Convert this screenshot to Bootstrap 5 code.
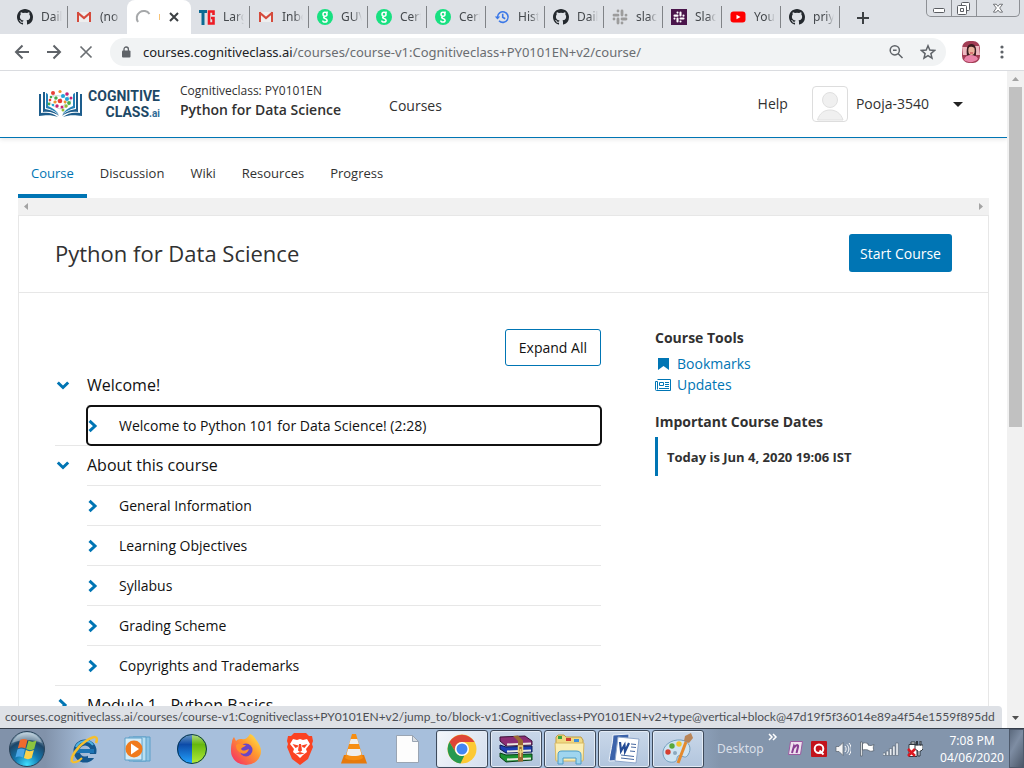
<!DOCTYPE html>
<html lang="en">
<head>
<meta charset="utf-8">
<meta name="viewport" content="width=device-width, initial-scale=1">
<title>Python for Data Science</title>
<link href="https://cdn.jsdelivr.net/npm/bootstrap@5.3.0/dist/css/bootstrap.min.css" rel="stylesheet">
<style>
  :root { --edx: #0075b4; --ink: #313131; --rule: #e7e7e7; }
  body { font-family: "Open Sans", "Noto Sans", sans-serif; font-size: 14px; line-height: 20px; color: var(--ink); background: #fff; }
  svg { display: block; flex: none; }
  button { font-family: inherit; }
  .ui-btn { border: 0; padding: 0; background: transparent; color: inherit; }

  /* browser frame */
  .tabstrip { height: 34px; background: #dee1e6; padding-left: 9px; font-family: "Noto Sans", sans-serif; font-size: 12px; color: #45494d; }
  .btab { width: 59px; height: 34px; padding: 0 3px 0 8px; gap: 8px; }
  .btab span { overflow: hidden; white-space: nowrap; width: 21px; -webkit-mask-image: linear-gradient(90deg, #000 60%, transparent); mask-image: linear-gradient(90deg, #000 60%, transparent); }
  .btab.sep { border-right: 1px solid transparent; border-image: linear-gradient(transparent 7px, #808387 7px, #808387 27px, transparent 27px) 1; }
  .btab.current { width: 64px; background: #fff; border-radius: 8px 8px 0 0; }
  .wincaps { height: 17px; border: 1px solid #8d9095; border-top: 0; border-radius: 0 0 5px 5px; margin-right: 4px; }
  .wincaps button { height: 16px; }
  .wincaps button + button { border-left: 1px solid #8d9095; }
  .toolbar { height: 37px; border-bottom: 1px solid #dadce0; padding: 0 20px 0 14px; color: #5f6368; }
  .omnibox { height: 28px; border-radius: 14px; background: #f1f3f4; padding: 0 10px 0 11px; }
  .urlbox { font-family: "Noto Sans", sans-serif; font-size: 13px; white-space: nowrap; color: #6a6d71; }
  .urlbox b { font-weight: 400; color: #202124; }
  .vbar { width: 17px; background: #f1f1f1; }
  .vthumb { width: 13px; height: 340px; background: #c1c1c1; }
  .statusline { position: absolute; left: 0; bottom: 0; height: 22px; padding: 0 7px 0 5px; background: #dee1e6; border-top-right-radius: 4px; font-family: "Lato", "Noto Sans", sans-serif; font-size: 12px; line-height: 22px; color: #4c4f54; white-space: nowrap; }

  /* course site */
  .site-header { height: 67px; border-bottom: 1px solid var(--edx); box-shadow: 0 1px 5px rgba(0,0,0,.12); padding: 0 44px 0 38px; }
  .wordmark { width: 77px; font-family: "Liberation Sans Narrow", "Roboto", sans-serif; font-weight: 700; font-size: 14px; line-height: 16px; color: #1d4866; text-align: right; }
  .wordmark small { font-size: 10px; line-height: 1; color: #2e6c96; }
  .site-header a, .course-tabs a { color: var(--ink); text-decoration: none; }
  .org { font-size: 12px; line-height: 20px; }
  .cname { font-size: 14px; font-weight: 600; line-height: 18px; }
  .userpic { width: 36px; height: 36px; border: 1px solid #ddd; border-radius: 4px; }
  .course-tabs { padding: 11px 18px 0; font-size: 13px; }
  .course-tabs .nav-link { height: 49px; padding: 14px 13px 0; border-bottom: 4px solid transparent; }
  .course-tabs .nav-link.active { color: var(--edx); border-color: var(--edx); }
  .hbar { height: 17px; background: #f1f1f1; margin: 0 18px; padding: 0 5px; }
  .sheet { margin: 0 18px; border: 1px solid var(--rule); }
  .sheet-head { padding: 18px 36px 20px; border-bottom: 1px solid var(--rule); }
  .sheet-head h1 { font-size: 22px; line-height: 38px; font-weight: 400; color: #313131; }
  .btn-start { height: 38px; padding: 0 10px; font-size: 14px; border-radius: 3px; background: var(--edx); color: #fff; }
  .btn-expand { height: 37px; padding: 0 13px; font-size: 14px; border: 1px solid var(--edx); border-radius: 3px; color: #111; background: #fff; }
  .sheet-body { padding: 36px; gap: 54px; }
  .side { width: 297px; }
  .outline, .outline ol { list-style: none; margin: 0; padding: 0; }
  .outline > li { border-bottom: 1px solid var(--rule); }
  .outline button { width: 100%; text-align: left; color: #111; }
  .outline .sec-btn { height: 39px; padding-bottom: 2px; font-size: 16px; gap: 16px; }
  .outline ol { padding-left: 32px; }
  .outline ol li { border-top: 1px solid var(--rule); }
  .sub-btn { height: 39px; font-size: 14px; gap: 20px; }
  .sub-btn.focused { outline: 2px solid #111; outline-offset: -1px; border-radius: 4px; }
  .side h2 { font-size: 14px; line-height: 18px; font-weight: 700; margin: 0 0 6px; }
  .side .links { margin-bottom: 18px; }
  .side a { color: var(--edx); text-decoration: none; gap: 6px; line-height: 21px; }
  .today { border-left: 3px solid var(--edx); padding: 10px 0 9px 9px; font-size: 13px; font-weight: 700; }

  /* taskbar */
  .taskbar { height: 40px; border-top: 1px solid #343c48; background: linear-gradient(90deg, #8192aa 0, #8192aa 45px, #a7bfdc 90px, #a7bfdc 650px, #8395ac 720px); font-family: "Noto Sans", sans-serif; font-size: 12px; color: #fff; }
  .start-btn { width: 57px; padding-left: 8px; }
  .slot { width: 54px; height: 39px; }
  .slot.running > span { width: 52px; height: 38px; border: 1px solid #3e4a5b; border-radius: 3px; box-shadow: inset 0 0 0 1px #e3ebf5; background: linear-gradient(#c9d7e9, #b2c5dd); display: flex; align-items: center; justify-content: center; }
  .slot.front > span { background: linear-gradient(120deg, #f4f7fb, #d4dfee); }
  .clock { width: 66px; line-height: 17px; text-align: center; }
  .peek { width: 15px; border: 1px solid #4d596b; background: linear-gradient(120deg, #5c6a7e, #7e8da3 40%, #4b5768); }
  .deskbar { color: #d9dfe8; }
</style>
</head>
<body>
<svg width="0" height="0" class="position-absolute" aria-hidden="true">
  <symbol id="octo" viewBox="0 0 16 16"><path fill="#24292e" d="M8 0C3.58 0 0 3.58 0 8c0 3.54 2.29 6.53 5.47 7.59.4.07.55-.17.55-.38v-1.49C4 14.09 3.48 13.2 3.32 12.75c-.09-.23-.48-.94-.82-1.13-.28-.15-.68-.52-.01-.53.63-.01 1.08.58 1.23.82.72 1.21 1.87.87 2.33.66.07-.52.28-.87.51-1.07-1.78-.2-3.64-.89-3.64-3.95 0-.87.31-1.59.82-2.15-.08-.2-.36-1.02.08-2.12 0 0 .67-.21 2.2.82a7.6 7.6 0 0 1 4 0c1.53-1.04 2.2-.82 2.2-.82.44 1.1.16 1.92.08 2.12.51.56.82 1.27.82 2.15 0 3.07-1.87 3.75-3.65 3.95.29.25.54.73.54 1.48v2.2c0 .21.15.46.55.38A8 8 0 0 0 16 8c0-4.42-3.58-8-8-8z"/></symbol>
  <symbol id="gmail" viewBox="0 0 16 16"><path fill="#eee" d="M2 3h12v10H2z"/><path fill="#d54b3d" d="M1 3h2v10H1zM13 3h2v10h-2z"/><path fill="none" stroke="#d54b3d" stroke-width="2.2" d="M1.500 3.500 8 9l6.500-5.500"/></symbol>
  <symbol id="guvi" viewBox="0 0 16 16"><circle cx="8" cy="8" r="8" fill="#18e081"/><g fill="none" stroke="#fff" stroke-width="1.500"><circle cx="8" cy="5.300" r="2"/><path d="M9.500 3.500 10.700 2.800M8 7.500c-1.800.6-1.800 1.600 0 2 2.800.5 2.800 3.500 0 3.500-1.500 0-2.200-.7-2.200-1.600"/></g></symbol>
  <symbol id="hash" viewBox="0 0 16 16"><path fill="none" stroke="currentColor" stroke-width="2.800" stroke-linecap="round" d="M6 2v.1M6 6.200H2M10 2v4M14 6.200v-.1M10 14v-.1M10 10h4M6 14v-4M2 10v.1"/></symbol>
  <symbol id="chev" viewBox="0 0 12 14"><path fill="none" stroke="#0075b4" stroke-width="3" d="M2.500 1.800 8 7l-5.500 5.200"/></symbol>
  <symbol id="chevdown" viewBox="0 0 14 12"><path fill="none" stroke="#0075b4" stroke-width="3" d="M1.800 3.500 7 8.500l5.200-5"/></symbol>
</svg>

<div class="vh-100 d-flex flex-column overflow-hidden">
  <header>
    <div class="tabstrip d-flex align-items-start">
      <div class="btab sep d-flex align-items-center"><svg width="16" height="16"><use href="#octo"/></svg><span>Daily</span></div>
      <div class="btab d-flex align-items-center"><svg width="16" height="16"><use href="#gmail"/></svg><span>(no</span></div>
      <div class="btab current d-flex align-items-center">
        <svg width="16" height="16" viewBox="0 0 16 16"><path fill="none" stroke="#a6a8aa" stroke-width="2" d="M3 13A7 7 0 0 1 14.500 5"/></svg>
        <svg width="2" height="8"><path d="M0 1h1v6H0z" fill="#f8c477"/></svg>
        <button class="ui-btn" aria-label="Close tab"><svg width="10" height="10" viewBox="0 0 10 10"><path stroke="#3c4043" stroke-width="2" d="m1 1 8 8M9 1 1 9"/></svg></button>
      </div>
      <div class="btab sep d-flex align-items-center"><svg width="16" height="16" viewBox="0 0 16 16"><path fill="#0c6a93" d="M0 1h8v3H5.500v12h-3V4H0z"/><path fill="none" stroke="#ee1c25" stroke-width="2.600" d="M14.500 6V2.500H10v12h4.500V9H12"/></svg><span>Large</span></div>
      <div class="btab sep d-flex align-items-center"><svg width="16" height="16"><use href="#gmail"/></svg><span>Inbox</span></div>
      <div class="btab sep d-flex align-items-center"><svg width="16" height="16"><use href="#guvi"/></svg><span>GUVI</span></div>
      <div class="btab sep d-flex align-items-center"><svg width="16" height="16"><use href="#guvi"/></svg><span>Certi</span></div>
      <div class="btab sep d-flex align-items-center"><svg width="16" height="16"><use href="#guvi"/></svg><span>Certi</span></div>
      <div class="btab sep d-flex align-items-center"><svg width="16" height="16" viewBox="0 0 16 16"><path fill="none" stroke="#3b78e7" stroke-width="1.600" d="M3.500 8A5.300 5.300 0 1 1 5 11.800M8.700 4.800v3.500l2.500 1.500"/><path fill="#3b78e7" d="M.8 7.500h5.400L3.500 10.500z"/></svg><span>Histo</span></div>
      <div class="btab sep d-flex align-items-center"><svg width="16" height="16"><use href="#octo"/></svg><span>Daily</span></div>
      <div class="btab sep d-flex align-items-center"><svg width="16" height="16" color="#9c9c9c"><use href="#hash"/></svg><span>slack</span></div>
      <div class="btab sep d-flex align-items-center"><svg width="16" height="16" viewBox="0 0 16 16" color="#fff"><path fill="#4a154b" d="M0 0h16v16H0z"/><use href="#hash" x="2" y="2" width="12" height="12"/></svg><span>Slack</span></div>
      <div class="btab sep d-flex align-items-center"><svg width="16" height="16" viewBox="0 0 16 16"><rect y="2.500" x=".5" width="15" height="11" rx="3" fill="#f00"/><path fill="#fff" d="m6.500 5.700 4 2.300-4 2.300z"/></svg><span>YouT</span></div>
      <div class="btab sep d-flex align-items-center"><svg width="16" height="16"><use href="#octo"/></svg><span>priya</span></div>
      <button class="ui-btn ms-3 mt-2 pt-1" aria-label="New tab"><svg width="14" height="12" viewBox="0 0 14 12"><path stroke="#3c4043" stroke-width="2" d="M7 0v12M1 6h12"/></svg></button>
      <div class="wincaps ms-auto d-flex">
        <button class="ui-btn px-1" aria-label="Minimize"><svg width="16" height="16" viewBox="0 0 16 16"><rect x="2.500" y="8.500" width="11" height="4" rx="1" fill="#fff" stroke="#5a5d62"/></svg></button>
        <button class="ui-btn px-1" aria-label="Restore"><svg width="16" height="16" viewBox="0 0 16 16" fill="#fff" stroke="#5a5d62"><rect x="5.500" y="2.500" width="8" height="8" rx="1"/><rect x="1.500" y="5.500" width="9" height="9" rx="1"/><path d="M4.500 8.500h3v3h-3z"/></svg></button>
        <button class="ui-btn px-3" aria-label="Close"><svg width="10" height="16" viewBox="0 0 12 16"><path d="M.5 3.500h3.500L6 6l2-2.500h3.500L8 8l3.500 5H8L6 10.500 4 13H.5L4 8z" fill="#fff" stroke="#5a5d62"/></svg></button>
      </div>
    </div>
    <div class="toolbar d-flex align-items-center">
      <button class="ui-btn me-3" aria-label="Back"><svg width="16" height="16" viewBox="0 0 16 16"><path fill="none" stroke="#5f6368" stroke-width="2" d="M15 8H2.500M8.500 1.500 2 8l6.500 6.500"/></svg></button>
      <button class="ui-btn me-3" aria-label="Forward"><svg width="16" height="16" viewBox="0 0 16 16"><path fill="none" stroke="#5f6368" stroke-width="2" d="M1 8h12.500M7.500 1.500 14 8l-6.500 6.500"/></svg></button>
      <button class="ui-btn me-3" aria-label="Stop"><svg width="16" height="16" viewBox="0 0 16 16"><path stroke="#6b6f73" stroke-width="1.700" d="m2.500 2.500 11 11M13.500 2.500l-11 11"/></svg></button>
      <div class="omnibox flex-grow-1 d-flex align-items-center">
        <svg width="10" height="12" viewBox="0 0 10 12" class="me-2"><rect x="1" y="4.500" width="8.500" height="7" rx="1" fill="#5f6368"/><path d="M3 5V3.200a2.200 2.200 0 0 1 4.400 0V5" fill="none" stroke="#5f6368" stroke-width="1.300"/></svg>
        <div class="urlbox flex-grow-1 ps-1" role="textbox" aria-label="Address" contenteditable="true" spellcheck="false"><b>courses.cognitiveclass.ai</b>/courses/course-v1:Cognitiveclass+PY0101EN+v2/course/</div>
        <button class="ui-btn me-3" aria-label="Zoom"><svg width="16" height="16" viewBox="0 0 16 16"><g fill="none" stroke="#5f6368" stroke-width="1.500"><circle cx="6.800" cy="6.300" r="4.600"/><path d="M10 9.500 14.500 14M5 6.300h3.600"/></g></svg></button>
        <button class="ui-btn" aria-label="Bookmark this page"><svg width="16" height="16" viewBox="0 0 16 16"><path fill="none" stroke="#5f6368" stroke-width="1.500" d="m8 1.800 1.800 4.300 4.700.4-3.600 3.100 1.100 4.600L8 11.700l-4 2.500 1.100-4.600L1.500 6.500l4.700-.4z"/></svg></button>
      </div>
      <svg width="18" height="22" viewBox="0 0 18 22" class="mx-3"><rect width="18" height="22" rx="7" fill="#a23c54"/><path fill="#edb8c0" d="M0 6h5v8H1zM13 5h4l1 9h-4z"/><path fill="#3a1c20" d="M5 15C4 8 5 3 9.500 3S15 9 13.500 15z"/><ellipse cx="9.500" cy="9.500" rx="3.200" ry="4.500" fill="#e9b29c"/><path fill="#3a1c20" d="M6 7c1-3 6-4 7 0-3-1-5-2-7 0z"/><path fill="#e983a8" d="M2 19c1-4 4-5 7-5s6 1 7 4c-4 4-10 4-14 1z"/><path d="M8 12h3" stroke="#c53548"/></svg>
      <button class="ui-btn ps-1" aria-label="Menu"><svg width="4" height="16" viewBox="0 0 4 16" fill="#5f6368"><circle cx="2" cy="3" r="1.600"/><circle cx="2" cy="8" r="1.600"/><circle cx="2" cy="13" r="1.600"/></svg></button>
    </div>
  </header>

  <div class="flex-fill d-flex position-relative overflow-hidden">
    <div class="flex-fill overflow-hidden">
      <div class="site-header d-flex align-items-center">
        <a href="#" class="d-flex align-items-center" aria-label="Cognitive Class home">
          <svg width="45" height="32" viewBox="0 0 45 32">
            <path fill="#1d5d8c" d="M1 6h2v19c7-1 12 0 17 4-6-2-11-2-19-1zM44 6h-2v19c-7-1-12 0-17 4 6-2 11-2 19-1z"/>
            <path fill="#1d5d8c" d="M5 4h2v17c6 1 11 3 14 7-4-3-9-5-16-4zM40 4h-2v17c-6 1-11 3-14 7 4-3 9-5 16-4z"/>
            <path fill="#2581b8" d="M8 5c1 0 2 1 2 2v11c5 2 9 5 11 9-4-4-8-6-13-7zM37 5c-1 0-2 1-2 2v11c-5 2-9 5-11 9 4-4 8-6 13-7z"/>
            <g stroke="#b9c8d0" stroke-width=".7" fill="none"><path d="m11 13 4-6 7 1 7-1 4 6-4 6-7 2-7-3zM15 7l3 7 8-6 3 6-7 7"/></g>
            <g fill="#e83e35"><circle cx="15" cy="5" r="2"/><circle cx="22" cy="13" r="2.300"/><circle cx="12" cy="12" r="1.300"/></g>
            <g fill="#46aa49"><circle cx="18" cy="10" r="1.700"/><circle cx="11" cy="16" r="1.400"/><circle cx="31" cy="15" r="1.900"/><circle cx="13" cy="9" r="1.300"/></g>
            <g fill="#f39330"><circle cx="22" cy="3.500" r="1.600"/><circle cx="17" cy="14" r="1.600"/><circle cx="27" cy="14" r="1.400"/></g>
            <g fill="#22a5d8"><circle cx="25" cy="8" r="2"/><circle cx="29" cy="11" r="2"/><circle cx="15" cy="17" r="1.300"/></g>
            <g fill="#c72373"><circle cx="29" cy="6" r="1.800"/><circle cx="19" cy="18" r="1.700"/><circle cx="33" cy="10" r="1.500"/><circle cx="24" cy="19" r="1.500"/></g>
            <g fill="#94bd39"><circle cx="28" cy="18" r="1.700"/><circle cx="25" cy="22" r="1.500"/></g>
          </svg>
          <span class="wordmark">COGNITIVE<br>CLASS<small>.ai</small></span>
        </a>
        <div class="ms-3 ps-1 pb-2">
          <div class="org">Cognitiveclass: PY0101EN</div>
          <div class="cname">Python for Data Science</div>
        </div>
        <a href="#" class="ms-5 pt-1">Courses</a>
        <a href="#" class="ms-auto me-4">Help</a>
        <span class="userpic d-block me-2"><svg width="34" height="34" viewBox="0 0 34 34"><g fill="#f0f0f0" stroke="#e0e0e0"><circle cx="17" cy="13" r="7.500"/><path d="M4.500 33c2-7 7-10 12.500-10s11 3 13 10z"/></g></svg></span>
        <button class="ui-btn d-flex align-items-center gap-4" aria-haspopup="true">Pooja-3540 <svg width="10" height="5" viewBox="0 0 10 5"><path d="M0 0h10L5 5z" fill="#222"/></svg></button>
      </div>

      <nav class="course-tabs nav" aria-label="Course">
        <a class="nav-link active" href="#" aria-current="page">Course</a>
        <a class="nav-link" href="#">Discussion</a>
        <a class="nav-link" href="#">Wiki</a>
        <a class="nav-link" href="#">Resources</a>
        <a class="nav-link" href="#">Progress</a>
      </nav>
      <div class="hbar d-flex align-items-center justify-content-between">
        <svg width="5" height="7"><path d="M5 0v7L1 3.500z" fill="#a3a3a3"/></svg>
        <svg width="5" height="7"><path d="M0 0v7l4-3.500z" fill="#a3a3a3"/></svg>
      </div>

      <main class="sheet">
        <div class="sheet-head d-flex justify-content-between">
          <h1 class="m-0">Python for Data Science</h1>
          <button class="btn btn-start">Start Course</button>
        </div>
        <div class="sheet-body d-flex">
          <div class="flex-fill">
            <div class="text-end"><button class="btn btn-expand">Expand All</button></div>
            <ol class="outline">
              <li>
                <button class="ui-btn sec-btn d-flex align-items-center"><svg width="16" height="12"><use href="#chevdown"/></svg>Welcome!</button>
                <ol>
                  <li><button class="ui-btn sub-btn focused d-flex align-items-center"><svg width="12" height="14"><use href="#chev"/></svg>Welcome to Python 101 for Data Science! (2:28)</button></li>
                </ol>
              </li>
              <li>
                <button class="ui-btn sec-btn d-flex align-items-center"><svg width="16" height="12"><use href="#chevdown"/></svg>About this course</button>
                <ol>
                  <li><button class="ui-btn sub-btn d-flex align-items-center"><svg width="12" height="14"><use href="#chev"/></svg>General Information</button></li>
                  <li><button class="ui-btn sub-btn d-flex align-items-center"><svg width="12" height="14"><use href="#chev"/></svg>Learning Objectives</button></li>
                  <li><button class="ui-btn sub-btn d-flex align-items-center"><svg width="12" height="14"><use href="#chev"/></svg>Syllabus</button></li>
                  <li><button class="ui-btn sub-btn d-flex align-items-center"><svg width="12" height="14"><use href="#chev"/></svg>Grading Scheme</button></li>
                  <li><button class="ui-btn sub-btn d-flex align-items-center"><svg width="12" height="14"><use href="#chev"/></svg>Copyrights and Trademarks</button></li>
                </ol>
              </li>
              <li><button class="ui-btn sec-btn d-flex align-items-center"><svg width="16" height="14"><use href="#chev"/></svg>Module 1 - Python Basics</button></li>
            </ol>
          </div>
          <aside class="side">
            <h2>Course Tools</h2>
            <div class="links">
              <a href="#" class="d-flex align-items-center"><svg width="16" height="14" viewBox="0 0 16 14"><path fill="#0075b4" d="M3 1h11v12l-5.500-4L3 13z"/></svg>Bookmarks</a>
              <a href="#" class="d-flex align-items-center"><svg width="16" height="12" viewBox="0 0 16 12"><path fill="none" stroke="#0075b4" d="M2.500.5h13v11h-14a1 1 0 0 1-1-1v-8h2v8M4.500 3.500h4v3h-4zM10 3.500h4M10 5.500h4M10 7.500h4M4 9.500h10"/></svg>Updates</a>
            </div>
            <h2>Important Course Dates</h2>
            <div class="today">Today is Jun 4, 2020 19:06 IST</div>
          </aside>
        </div>
      </main>
    </div>
    <div class="vbar d-flex flex-column align-items-center justify-content-between py-1">
      <div><svg width="13" height="12" viewBox="0 0 13 12"><path d="M3 6h7L6.500 2z" fill="#a3a3a3"/></svg><div class="vthumb"></div></div>
      <svg width="13" height="9" viewBox="0 0 13 9"><path d="M3 1h7L6.500 5z" fill="#505050"/></svg>
    </div>
    <div class="statusline">courses.cognitiveclass.ai/courses/course-v1:Cognitiveclass+PY0101EN+v2/jump_to/block-v1:Cognitiveclass+PY0101EN+v2+type@vertical+block@47d19f5f36014e89a4f54e1559f895dd</div>
  </div>

  <footer class="taskbar d-flex align-items-center">
    <button class="ui-btn start-btn" aria-label="Start"><svg width="38" height="38" viewBox="0 0 38 38">
      <defs><radialGradient id="orb" cx=".5" cy=".95" r=".9"><stop offset="0" stop-color="#3fe0ff"/><stop offset=".4" stop-color="#1479b0"/><stop offset=".75" stop-color="#1d4668"/><stop offset="1" stop-color="#9ab6c8"/></radialGradient></defs>
      <circle cx="19" cy="19" r="17.500" fill="url(#orb)" stroke="#2a4258"/><path d="M4 13a16 16 0 0 1 30 0c-9-4-21-4-30 0z" fill="#fff" opacity=".35"/>
      <path fill="#ee6a2e" d="M12 10c2.500-1.500 5-1.500 7.500 0l-2.200 8.500c-2.500-1.500-5-1.500-7.500 0z"/><path fill="#8cc43f" d="M20.500 10.500c2.500 1.500 5 1.500 8 0l-2.300 8.500c-2.500 1.500-5 1.500-8 0z"/><path fill="#4ba6e6" d="M9.400 19.500c2.500-1.500 5-1.500 7.500 0l-2 8c-2.500-1.500-5-1.500-7.500 0z"/><path fill="#fcd14a" d="M17.900 20c2.500 1.500 5 1.500 8 0l-2.200 8c-2.500 1.500-5 1.500-7.800 0z"/></svg></button>
    <button class="ui-btn slot d-flex align-items-center justify-content-center" aria-label="Internet Explorer"><svg width="32" height="32" viewBox="0 0 32 32"><circle cx="17" cy="18" r="8.500" fill="none" stroke="#14578e" stroke-width="6"/><path d="M8 18h18" stroke="#1d74b4" stroke-width="4"/><path d="M20 21h9v4h-9z" fill="#a7bfdc"/><path d="M8 14a10 10 0 0 1 17-2" fill="none" stroke="#4fb4e4" stroke-width="2"/><path d="M4 29C2 24 10 13 18 8S31 2 28 10" fill="none" stroke="#f6bf2c" stroke-width="2.500"/><path d="M4 29c3 1 7-1 10-4" fill="none" stroke="#f6bf2c" stroke-width="2"/></svg></button>
    <button class="ui-btn slot d-flex align-items-center justify-content-center" aria-label="Media Player"><svg width="30" height="28" viewBox="0 0 30 28"><path fill="#8fc4e4" stroke="#5d9fc8" d="M10 2h17v24H10z"/><path fill="#b9dff2" stroke="#5d9fc8" d="M6 2h17v24H6z"/><path fill="#d3ebf7" stroke="#5d9fc8" d="M2 3h17v22H2z"/><circle cx="11" cy="14" r="8.500" fill="#f07a1c"/><path fill="#fff" d="m8 8.500 8 5.500-8 5.500z"/></svg></button>
    <button class="ui-btn slot d-flex align-items-center justify-content-center" aria-label="Meeting"><svg width="32" height="32" viewBox="0 0 32 32">
      <defs><linearGradient id="wl" x2="0" y2="1"><stop offset="0" stop-color="#6f9dc4"/><stop offset=".35" stop-color="#0d4ba8"/><stop offset="1" stop-color="#23a4ff"/></linearGradient><linearGradient id="wr" x2="0" y2="1"><stop offset="0" stop-color="#b5dc8a"/><stop offset=".35" stop-color="#66b80e"/><stop offset="1" stop-color="#b5ee3a"/></linearGradient></defs>
      <path d="M16 1a15 15 0 0 0 0 30z" fill="url(#wl)"/><path d="M16 1a15 15 0 0 1 0 30z" fill="url(#wr)"/><circle cx="16" cy="16" r="14.500" fill="none" stroke="#0c3852"/></svg></button>
    <button class="ui-btn slot d-flex align-items-center justify-content-center" aria-label="Firefox"><svg width="32" height="32" viewBox="0 0 32 32"><defs><linearGradient id="fox" x1="1" y1="0" x2="0" y2="1"><stop offset="0" stop-color="#fff34f"/><stop offset=".4" stop-color="#ff9a2e"/><stop offset="1" stop-color="#f5206b"/></linearGradient></defs><path fill="url(#fox)" d="M2 9c0-2 1-4 2-5l2 4c2-2 4-2 6-2 2 1 5 0 8-5 4 1 5 5 7 7 2 3 4 6 4 10a15 14 0 0 1-30 0c0-3 0-6 1-9z"/><circle cx="16" cy="17" r="6.500" fill="#6b45c5"/><path fill="#ff8f2b" d="M6 12c4-3 7 0 10 0-1 2-4 2-5 4 2 3 5 1 8 0-1 4-5 6-8 4-4-2-5-5-5-8z"/></svg></button>
    <button class="ui-btn slot d-flex align-items-center justify-content-center" aria-label="Brave"><svg width="28" height="34" viewBox="0 0 28 34"><path fill="#fb4322" d="m8 1h12l3 3h3l1 5-1 3 1 3-5 12-8 6-8-6L1 15l1-3-1-3 1-5h3z"/><path fill="#fff" d="m7 7 4 1 3-1 3 1 4-1 3 5-4 5 1 3-4 3-3 3-3-3-4-3 1-3-4-5z"/><path fill="#fb4322" d="m6.500 12 6 1.500-1 1.500-2 1zM21.500 12l-6 1.500 1 1.500 2 1zM13 12h2l1 6.500-2 1.500-2-1.500zM9.500 21.500l4.500-1.500 4.500 1.500-4.500 1z"/></svg></button>
    <button class="ui-btn slot d-flex align-items-center justify-content-center" aria-label="VLC"><svg width="28" height="32" viewBox="0 0 28 32"><path fill="#e67a0c" d="M4 22h20l3 8.500H1z"/><path fill="#f78e12" d="M12 1h4l7 24c-4 3-14 3-18 0z"/><path fill="#eee" d="M10.700 6h6.600l1.500 5H9.200zM8 16h12l1.500 5.500c-4 2-11 2-15 0z"/></svg></button>
    <button class="ui-btn slot d-flex align-items-center justify-content-center" aria-label="Document"><svg width="24" height="30" viewBox="0 0 24 30"><path fill="#fdfdfd" stroke="#9aa5b3" d="M.500 1.500h16l6 6v21H.500z"/><path fill="#d9dde2" stroke="#9aa5b3" d="M16.500 1.500v6h6z"/></svg></button>
    <button class="ui-btn slot running front d-flex align-items-center justify-content-center" aria-label="Chrome"><span><svg width="30" height="30" viewBox="0 0 30 30"><circle cx="15" cy="15" r="14.500" fill="#fcc934"/><path fill="#de4637" d="M2.400 8A14.500 14.500 0 0 1 27.500 8H15a7 7 0 0 0-6.500 10z"/><path fill="#25994f" d="M2.400 8 8.900 18.500c1.500 3 5 4 8.500 3L13.500 29.400A14.500 14.500 0 0 1 2.400 8z"/><circle cx="15" cy="15" r="7" fill="#fff"/><circle cx="15" cy="15" r="5.500" fill="#4286f4"/></svg></span></button>
    <button class="ui-btn slot running d-flex align-items-center justify-content-center" aria-label="WinRAR"><span><svg width="34" height="28" viewBox="0 0 34 28"><path fill="#8b2e74" stroke="#3b1138" d="m1 2 25-1 7 5v4l-26 1-6-5z"/><path fill="#1b3fb4" stroke="#0c1a50" d="m1 10 6 2 26-1v6l-26 1-6-4z"/><path fill="#1b9333" stroke="#0a3f16" d="m1 18 6 2 26-1v6l-26 2-6-5z"/><path stroke="#ece9e0" stroke-width="2" d="M8 9.500 32 8.500M8 16.500l24-1M8 24.500l24-1"/><path fill="#9b6a31" d="m14 1 5-.5 5 5v21h-5V6z"/><path fill="none" stroke="#ead37a" stroke-width="1.500" d="M19.500 11h4v6h-4zM21.500 14v8"/></svg></span></button>
    <button class="ui-btn slot running d-flex align-items-center justify-content-center" aria-label="File Explorer"><span><svg width="34" height="32" viewBox="0 0 34 32"><path fill="#f1d981" stroke="#bd9c45" d="M3 4 5 2h6l2 2h15l2 3v20H3z"/><path fill="#3aa53c" d="M5 3h4v3H5z"/><path fill="#d03a2f" d="M13 5h5v3h-5z"/><path fill="#3f8fd8" d="M21 6h5v3h-5z"/><path fill="#fbeeb3" stroke="#d8b965" d="M2 10h29l-1 18H3z"/><path fill="#9fd5ef" stroke="#4d9cc7" d="M5 31V22c0-3 1-4 4-4h14c3 0 5 1 5 4v9h-5v-6H10v6z"/></svg></span></button>
    <button class="ui-btn slot running d-flex align-items-center justify-content-center" aria-label="Word"><span><svg width="34" height="32" viewBox="0 0 34 32"><path fill="#3c63aa" stroke="#f3f7fc" d="M6 2 22 1l-1 26-19 1C3 19 6 10 6 2z"/><path fill="#fff" stroke="#8fa7cb" d="m11 4 21 2-3 24-21-2z"/><path d="m14 22 13 1.500M14 25l13 1.500M24 11l5 .5M24 14l5 .5M23 18l5 .5" stroke="#4667a0"/><path d="m13 9 1 9 3.500-6 .500 6.500 4-8.500" fill="none" stroke="#244b95" stroke-width="2.200"/></svg></span></button>
    <button class="ui-btn slot running d-flex align-items-center justify-content-center" aria-label="Paint"><span><svg width="34" height="32" viewBox="0 0 34 32"><path fill="#cfe4f2" stroke="#74a0bf" d="M2 21C1 13 10 6 20 7c9 1 11 9 7 15-3 5-7-1-10 1-2 2 0 5-4 6-6 1-10-2-11-8z"/><circle cx="7" cy="19" r="2.700" fill="#d54031"/><circle cx="11" cy="13" r="2.700" fill="#58a83b"/><circle cx="18" cy="11" r="2.700" fill="#f3c52f"/><circle cx="14" cy="20" r="2" fill="#8ba9bf"/><path d="M17 30 25 9" stroke="#e48a2d" stroke-width="3"/><path fill="#b98558" d="m23 8 1-5 6-3 2 5-4 5z"/></svg></span></button>
    <span class="deskbar ms-2 ps-1">Desktop</span>
    <svg width="10" height="8" viewBox="0 0 10 8" class="ms-1 mb-4"><path d="m1 1 3 3-3 3M5 1l3 3-3 3" fill="none" stroke="#fff" stroke-width="1.500"/></svg>
    <div class="ms-auto d-flex align-items-center gap-2">
      <svg width="16" height="16" viewBox="0 0 16 16"><path fill="#eee0ef" stroke="#9b5aa0" d="M3.500.5h12l-2 13h-12z"/><path fill="none" stroke="#8a3d92" stroke-width="2" d="m5 12 2-7 .5 1c3-3 4-2 3.500 0l-1.500 6"/></svg>
      <svg width="16" height="16" viewBox="0 0 16 16"><rect width="16" height="16" rx="1" fill="#c3141b"/><circle cx="8" cy="7.800" r="4.300" fill="none" stroke="#fff" stroke-width="2"/><path d="m8.500 9.500 4 4" stroke="#fff" stroke-width="2"/></svg>
      <svg width="16" height="16" viewBox="0 0 16 16"><path fill="#f4f4f4" stroke="#59626d" stroke-width=".7" d="M1 5.500h3l4-4v13l-4-4H1z"/><path fill="none" stroke="#fff" d="M10 5c1.500 2 1.500 4 0 6M12 3.500c2.500 3 2.500 6 0 9M14 2c3 4 3 8 0 12"/></svg>
      <svg width="16" height="16" viewBox="0 0 16 16"><path fill="#fff" stroke="#4e5763" stroke-width=".7" d="M1.500 1h1.700v14H1.500zM3.500 2.500c3-1.500 4 0 5.500 0v1.500c2 1 4 .5 6-.5-1 3-1 4 0 6-3 1.500-5 .5-6-.5-2-.5-3-.5-5.500 0z"/></svg>
      <svg width="16" height="14" viewBox="0 0 16 14" fill="#e9edf2" stroke="#566171" stroke-width=".6"><path d="M0 11h2.500v2.500H0zM3.200 9h2.500v4.500H3.200zM6.400 6.500h2.500v7H6.400zM9.600 4h2.500v9.500H9.600zM12.800 1h2.500v12.500h-2.500z"/></svg>
      <svg width="16" height="16" viewBox="0 0 16 16"><path fill="#fff" stroke="#303840" d="M2 3.500h8v12H2zM4 1h4v2H4z"/><path fill="#fff" stroke="#303840" d="M8 4h8v4l-2 2h-1v5h-2v-5l-3-2zM9.500 0h1v4h-1zM13 0h1v4h-1z"/><path stroke="#dd1820" stroke-width="2.500" d="m1 8 7 7M8 8l-7 7"/></svg>
      <div class="clock ms-2 me-1"><div>7:08 PM</div><div>04/06/2020</div></div>
    </div>
    <button class="ui-btn peek align-self-stretch" aria-label="Show desktop"></button>
  </footer>
</div>
<script src="https://cdn.jsdelivr.net/npm/bootstrap@5.3.0/dist/js/bootstrap.bundle.min.js"></script>
</body>
</html>
